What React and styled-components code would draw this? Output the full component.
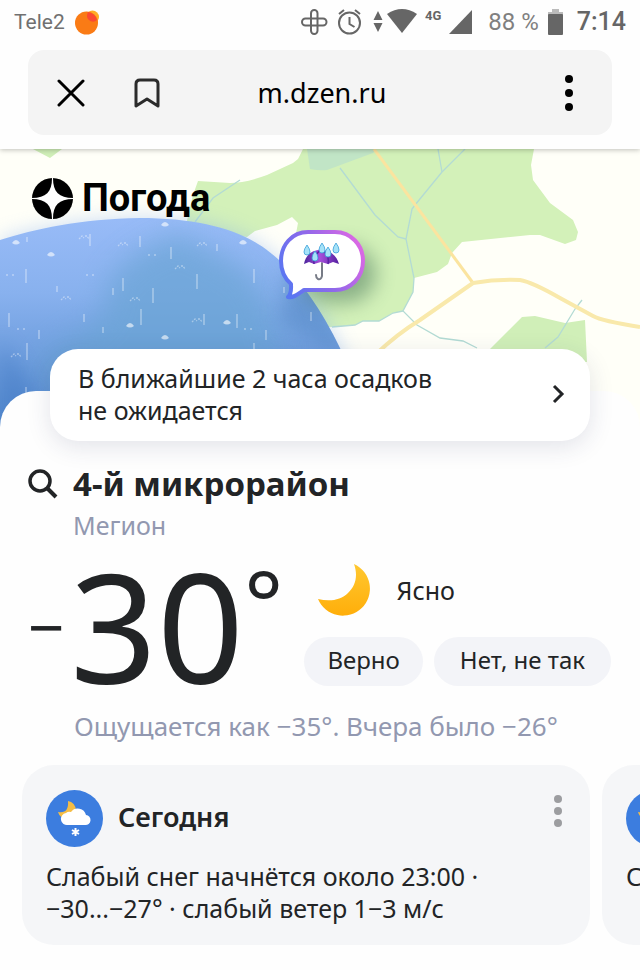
import React from "react";
import styled, { createGlobalStyle } from "styled-components";

const GlobalStyle = createGlobalStyle`
  *, *::before, *::after { box-sizing: border-box; }
  body {
    margin: 0;
    background: #fefefe;
    color: #222426;
    font-family: "Noto Sans", "Open Sans", sans-serif;
    font-size: 25px;
    line-height: 32px;
    overflow-x: hidden;
  }
  button { font: inherit; color: inherit; border: 0; background: none; padding: 0; cursor: pointer; }
  a { color: inherit; text-decoration: none; }
  h1, h2, p { margin: 0; font-weight: 400; }
  svg { display: block; flex: none; }
`;

const Header = styled.header`
  position: relative;
  z-index: 2;
  padding-bottom: 14px;
  background: #fefefe;
  box-shadow: 0 1px 5px rgba(0, 0, 0, 0.25);
`;

const StatusBar = styled.div`
  display: flex;
  align-items: center;
  justify-content: space-between;
  height: 44px;
  padding: 0 14px;
  margin-bottom: 6px;
  color: #666;
  font-family: Roboto, sans-serif;
`;

const Carrier = styled.div`
  display: flex;
  align-items: center;
  gap: 10px;
  color: #707070;
  font-size: 21px;
`;

const Indicators = styled.div`
  display: flex;
  align-items: center;
`;

const Battery = styled.span`
  margin: 0 9px 0 14px;
  color: #808080;
  font-size: 24px;
`;

const Clock = styled.time`
  margin-left: 14px;
  font-size: 25px;
  font-weight: 500;
`;

const AddressBar = styled.nav`
  display: grid;
  grid-template-columns: 86px 66px 1fr 148px;
  align-items: center;
  height: 85px;
  margin: 0 28px;
  border-radius: 16px;
  background: #f4f4f4;
  color: #000;
`;

const IconButton = styled.button`
  display: grid;
  place-items: center;
  height: 48px;
`;

const Address = styled.span`
  text-align: center;
  font-size: 27px;
`;

const MoreButton = styled(IconButton)`
  justify-self: end;
  width: 86px;
`;

const Hero = styled.section`
  position: relative;
  min-height: 278px;
  padding: 28px 32px;
  overflow: hidden;
  background: #fffff8;
`;

const MapCanvas = styled.svg`
  position: absolute;
  inset: 0;
  width: 100%;
  height: 100%;
`;

const Brand = styled.a`
  position: relative;
  display: inline-flex;
  align-items: center;
  gap: 9px;
  color: #000;
  font-family: Roboto, sans-serif;
  font-size: 38px;
  font-weight: 700;
  line-height: 42px;
`;

const Sheet = styled.main`
  position: relative;
  z-index: 1;
  margin-top: -36px;
  border-radius: 36px 36px 0 0;
  background: #fefefe;
`;

const Nowcast = styled.a`
  display: flex;
  align-items: center;
  justify-content: space-between;
  gap: 24px;
  position: relative;
  top: -42px;
  margin: 0 50px -42px;
  padding: 13px 24px 15px 28px;
  border-radius: 28px;
  background: #fff;
  box-shadow: 0 6px 24px rgba(40, 50, 90, 0.13);
`;

const Place = styled.section`
  display: grid;
  grid-template-columns: 45px 1fr;
  align-items: center;
  padding: 22px 28px 0;
`;

const PlaceName = styled.h1`
  font-size: 33px;
  font-weight: 700;
  line-height: 42px;
`;

const Region = styled.p`
  grid-column: 2;
  margin-top: 4px;
  color: #9298b0;
`;

const Current = styled.section`
  display: flex;
  justify-content: space-between;
  height: 158px;
  padding: 0 28px;
`;

const Temperature = styled.div`
  display: flex;
  align-items: flex-start;
  font-size: 152px;
  line-height: 168px;
`;

const Sign = styled.span`
  width: 42px;
  font-size: 64px;
  line-height: 172px;
`;

const Degree = styled.span`
  font-size: 92px;
  line-height: 122px;
`;

const Conditions = styled.div`
  display: flex;
  flex-direction: column;
  gap: 20px;
  padding-top: 22px;
`;

const Sky = styled.div`
  display: flex;
  align-items: center;
  gap: 26px;
  height: 54px;
  padding-left: 14px;
`;

const Votes = styled.div`
  display: flex;
  gap: 11px;
  margin-right: 1px;
`;

const Vote = styled.button`
  height: 49px;
  padding: 0 ${({ $wide }) => ($wide ? 26 : 23)}px 4px;
  border-radius: 25px;
  background: #f3f4f8;
  font-size: 24px;
  white-space: nowrap;
`;

const FeelsLike = styled.p`
  padding: 11px 28px 0 74px;
  color: #9298b0;
  font-size: 26px;
`;

const Days = styled.section`
  display: flex;
  gap: 12px;
  margin-top: 23px;
  padding: 0 22px 24px;
  overflow-x: auto;
  scrollbar-width: none;
`;

const DayCard = styled.article`
  flex: 0 0 calc(100% - 28px);
  padding: 25px 24px 21px;
  border-radius: 32px;
  background: #f5f6f8;
`;

const DayHeader = styled.header`
  display: grid;
  grid-template-columns: 57px 1fr auto;
  gap: 15px;
  margin-bottom: 13px;
  align-items: center;
`;

const DayTitle = styled.h2`
  padding-bottom: 3px;
  font-size: 27px;
  font-weight: 600;
`;

const DayMenu = styled.button`
  width: 12px;
  height: 42px;
  align-self: start;
`;

const DayText = styled.p`
  white-space: nowrap;
`;

const rain = [
  [90, 85, 12], [140, 87, 11], [171, 98, 12], [217, 95, 7], [26, 120, 14], [123, 129, 13],
  [197, 125, 15], [153, 139, 15], [254, 120, 14], [57, 137, 6], [113, 139, 7], [9, 164, 14],
  [84, 165, 8], [141, 160, 16], [204, 165, 11], [237, 165, 14], [39, 181, 9], [103, 178, 6],
  [266, 181, 10], [27, 194, 17], [254, 194, 10], [311, 163, 9], [26, 238, 12],
  [284, 138, 6], [27, 88, 5],
];
const splashes = [
  [16, 94], [51, 106], [165, 76], [243, 94], [130, 177], [165, 189], [227, 174],
];
const ripples = [
  [84, 89], [123, 96], [202, 96], [180, 119], [66, 150], [135, 151], [197, 172], [16, 207],
];
const traces = [[90, 126], [152, 106], [21, 180], [248, 180], [10, 126]];

function RegionMap() {
  return (
    <MapCanvas viewBox="0 0 640 278" preserveAspectRatio="xMidYMin slice" aria-hidden="true">
      <defs>
        <linearGradient id="rainFill" x1="0.35" y1="0.2" x2="0.35" y2="1">
          <stop offset="0" stopColor="#9bbdf9" />
          <stop offset="0.4" stopColor="#88b1ee" />
          <stop offset="1" stopColor="#5288cc" />
        </linearGradient>
        <linearGradient id="bubbleEdge" x1="0" y1="0.7" x2="1" y2="0.3">
          <stop offset="0" stopColor="#5877f2" />
          <stop offset="0.5" stopColor="#9068ea" />
          <stop offset="1" stopColor="#da68e4" />
        </linearGradient>
        <linearGradient id="canopy" x1="0" y1="0" x2="1" y2="0">
          <stop offset="0" stopColor="#4b249b" />
          <stop offset="0.45" stopColor="#a84fdc" />
          <stop offset="1" stopColor="#54209f" />
        </linearGradient>
        <filter id="soft" x="-30%" y="-30%" width="160%" height="160%" colorInterpolationFilters="sRGB">
          <feGaussianBlur stdDeviation="14" />
        </filter>
        <filter id="halo" x="-50%" y="-50%" width="200%" height="200%" colorInterpolationFilters="sRGB">
          <feGaussianBlur stdDeviation="10" />
        </filter>
        <clipPath id="rainArea">
          <path d="M0 91C35 80 80 70 140 69C190 69 232 78 258 95C290 114 320 157 340 199L370 278H0Z" />
        </clipPath>
      </defs>
      <path d="M33 0L50 9L62 0Z" fill="#d0efb8" />
      <path
        d="M303 0L298 10L293 14L267 26Q245 34 230 34L198 32L193 46L185 80L247 88L255 82L277 76L292 68L298 74L295 90L300 178L332 178L355 176L363 172L379 172L393 164L403 162L413 143L414 129L437 123L448 115L452 104L462 93L530 86L540 86L565 95L576 91L578 83L573 71L550 54L533 31L531 16L534 0Z"
        fill="#d3f1b9"
      />
      <path d="M307 0L310 20Q320 22 327 21L373 4L376 0Z" fill="#c1e5c6" />
      <path d="M490 200L522 168L535 167L565 174L585 171L587 213H480Z" fill="#d0efb8" />
      <g fill="none" stroke="#b3dbd4" strokeWidth="1.3">
        <path d="M340 19L375 66L398 88L406 90" />
        <path d="M465 0L442 23L415 56L412 60L406 90L414 129L413 143L403 162L417 176L440 189L463 192L477 199" />
        <path d="M438 0L442 23" />
        <path d="M582 151L575 160L558 188L545 199" />
        <path d="M332 178L355 176L363 172L379 172L393 164L403 162" />
        <path d="M240 31L213 49L195 73" />
      </g>
      <path d="M374 0L473 134" fill="none" stroke="#fbe49f" strokeWidth="3" />
      <path
        d="M375 206Q397 185 420 171Q450 150 473 134Q496 130 520 131Q532 133 560 149L593 167Q602 172 640 178"
        fill="none"
        stroke="#f9e9ab"
        strokeWidth="4"
      />
      <path
        d="M0 91C35 80 80 70 140 69C190 69 232 78 258 95C290 114 320 157 340 199L370 278H0Z"
        fill="#7ca8ef"
        opacity="0.4"
        filter="url(#halo)"
      />
      <g clipPath="url(#rainArea)">
        <rect width="400" height="278" fill="url(#rainFill)" />
        <path d="M180 84C150 94 100 120 106 155C100 185 45 190 42 220L80 278H260C300 210 270 150 245 120Z" fill="#6aa4d4" opacity="0.7" filter="url(#soft)" />
        <path d="M0 190L32 240V278H0Z" fill="#4279c4" opacity="0.5" filter="url(#halo)" />
        <path d="M285 120L325 150L345 205L280 175Z" fill="#4c83bd" opacity="0.5" filter="url(#halo)" />
        <g stroke="#fff" strokeOpacity="0.45" strokeWidth="1.3">
          {rain.map(([x, y, length]) => (
            <path key={`${x}-${y}`} d={`M${x} ${y}v${length}`} />
          ))}
        </g>
        <g fill="#fff" fillOpacity="0.6">
          {splashes.map(([x, y]) => (
            <path key={`${x}-${y}`} d={`M${x - 4} ${y}q4 -6 8 0q-4 3 -8 0Z`} />
          ))}
        </g>
        <g fill="none" stroke="#fff" strokeOpacity="0.4" strokeWidth="1.3" strokeDasharray="2 1">
          {ripples.map(([x, y]) => (
            <path key={`${x}-${y}`} d={`M${x - 5} ${y + 1}l3 -3l2 2M${x + 1} ${y - 2}l2 0l2 3`} />
          ))}
          {traces.map(([x, y]) => (
            <path key={`${x}-${y}`} d={`M${x - 4} ${y}h3M${x + 2} ${y}h3`} />
          ))}
        </g>
      </g>
      <rect x="300" y="96" width="76" height="58" rx="29" fill="#31624a" opacity="0.45" filter="url(#halo)" />
      <path
        d="M308 83H335C351 83 363 96 363 112C363 128 351 141 335 141H304C298 145 294 149 288 148C292 144 291 139 291 135C284 129 281 121 281 112C281 96 292 83 308 83Z"
        fill="#fff"
        stroke="url(#bubbleEdge)"
        strokeWidth="4"
        strokeLinejoin="round"
      />
      <path d="M322 114V127Q321 131 318 130Q316 129 316 126" fill="none" stroke="#777b86" strokeWidth="2" strokeLinecap="round" />
      <path d="M304 115C307 96 334 96 339 115L333 113L328 115L321 113L314 115L309 113Z" fill="url(#canopy)" />
      <path d="M321 101Q313 106 314 115M322 101Q330 106 328 115" fill="none" stroke="#5b24a7" strokeWidth="1.5" />
      <g fill="#a5e2f8" stroke="#3a9ed8" strokeWidth="0.8">
        {[[307, 96], [322, 94], [336, 94], [315, 102], [328, 98]].map(([x, y]) => (
          <path key={x} d={`M${x} ${y}q-3 4 -3 7a3 3 0 0 0 6 0q0 -3 -3 -7Z`} />
        ))}
      </g>
    </MapCanvas>
  );
}

function Dots({ color, gap, radius }) {
  const size = radius * 2;
  return (
    <svg width={size} height={gap * 2 + size} fill={color} aria-hidden="true">
      {[0, 1, 2].map((i) => (
        <circle key={i} cx={radius} cy={radius + gap * i} r={radius} />
      ))}
    </svg>
  );
}

function Moon() {
  return (
    <svg width="52" height="52" viewBox="0 0 52 52" aria-hidden="true">
      <defs>
        <linearGradient id="moon" x1="0" y1="0" x2="0" y2="1">
          <stop offset="0" stopColor="#ffc830" />
          <stop offset="1" stopColor="#ffae0a" />
        </linearGradient>
      </defs>
      <path d="M36 0A27 27 0 1 1 0 35C12 38 23 36 30 29C38 22 40 11 36 0Z" fill="url(#moon)" />
    </svg>
  );
}

function SnowBadge() {
  return (
    <svg width="57" height="57" viewBox="0 0 57 57" aria-hidden="true">
      <circle cx="28.5" cy="28.5" r="28.5" fill="#3c7ddf" />
      <path d="M22 11A9 9 0 1 1 12 22Q23 24 22 11Z" fill="#f5bd45" />
      <path d="M22 35A6 6 0 0 1 20 23A5 5 0 0 1 25 22A8.5 8.5 0 0 1 40 25A5 5 0 1 1 39 35Z" fill="#fff" />
      <path d="M29.5 38v8M26 40l7 4M33 40l-7 4" stroke="#fff" strokeWidth="2" />
    </svg>
  );
}

function StatusIcons() {
  return (
    <svg width="173" height="30" viewBox="301 7 173 30" fill="none" stroke="#666" strokeWidth="2" aria-label="Будильник, Wi-Fi, 4G" role="img">
      <rect x="311" y="10" width="6.5" height="24" rx="3.2" />
      <rect x="302" y="18.5" width="24.5" height="7" rx="3.5" />
      <circle cx="349.5" cy="23" r="10.5" />
      <path d="M349.5 17v7l5 3M339 14l5-4M355 10l5 4" />
      <g fill="#666" stroke="none">
        <path d="M373.5 20l4.5-9 4.5 9zM373.5 23h9l-4.5 9z" />
        <path d="M387 14Q402 4 417 14L402 33Z" />
        <path d="M449 34L472 10V34Z" />
        <text x="425" y="20" fontFamily="Roboto, sans-serif" fontSize="13" fontWeight="700">4G</text>
      </g>
    </svg>
  );
}

export default function App() {
  return (
    <>
      <GlobalStyle />
      <Header>
        <StatusBar>
          <Carrier>
            Tele2
            <svg width="25" height="25" viewBox="0 0 25 25" aria-hidden="true">
              <circle cx="17.5" cy="7" r="6.5" fill="#ffad27" />
              <circle cx="11.5" cy="13" r="11.5" fill="#fa7b15" />
              <path d="M12 5A6 6 0 0 0 22 10A11 11 0 0 0 13 2Z" fill="#fb4932" />
            </svg>
          </Carrier>
          <Indicators>
            <StatusIcons />
            <Battery>88 %</Battery>
            <svg width="15" height="26" viewBox="0 0 15 26" aria-hidden="true">
              <path d="M4 0H11V3H15V7H0V3H4Z" fill="#bbb" />
              <rect y="5" width="15" height="21" rx="1" fill="#666" />
            </svg>
            <Clock>7:14</Clock>
          </Indicators>
        </StatusBar>
        <AddressBar aria-label="Браузер">
          <IconButton aria-label="Закрыть">
            <svg width="28" height="28" viewBox="0 0 28 28" stroke="#000" strokeWidth="3" strokeLinecap="round">
              <path d="M2 2L26 26M26 2L2 26" />
            </svg>
          </IconButton>
          <IconButton aria-label="Добавить в закладки">
            <svg width="26" height="30" viewBox="0 0 26 30" fill="none" stroke="#2b2b2b" strokeWidth="3" strokeLinejoin="round">
              <path d="M2 28V6Q2 2 6 2H20Q24 2 24 6V28L13 21Z" />
            </svg>
          </IconButton>
          <Address>m.dzen.ru</Address>
          <MoreButton aria-label="Меню">
            <Dots color="#000" gap={14} radius={4} />
          </MoreButton>
        </AddressBar>
      </Header>
      <Hero>
        <RegionMap />
        <Brand href="#weather">
          <svg width="41" height="41" viewBox="0 0 41 41" aria-hidden="true">
            <circle cx="20.5" cy="20.5" r="20.5" fill="#000" />
            <path d="M20 0H21C21 14 27 20 41 20V21C27 21 21 27 21 41H20C20 27 14 21 0 21V20C14 20 20 14 20 0Z" fill="#fff" />
          </svg>
          Погода
        </Brand>
      </Hero>
      <Sheet id="weather">
        <Nowcast href="#nowcast">
          <span>
            В ближайшие 2 часа осадков
            <br />
            не ожидается
          </span>
          <svg width="16" height="20" viewBox="0 0 16 20" fill="none" stroke="#222426" strokeWidth="3" aria-hidden="true">
            <path d="M4 2L12 10L4 18" />
          </svg>
        </Nowcast>
        <Place>
          <svg width="30" height="30" viewBox="0 0 30 30" fill="none" stroke="#222426" strokeWidth="3.5" aria-hidden="true">
            <circle cx="12" cy="12" r="10" />
            <path d="M19 19L28 28" strokeWidth="4" />
          </svg>
          <PlaceName>4-й микрорайон</PlaceName>
          <Region>Мегион</Region>
        </Place>
        <Current>
          <Temperature>
            <Sign>−</Sign>
            <span>30</span>
            <Degree>°</Degree>
          </Temperature>
          <Conditions>
            <Sky>
              <Moon />
              Ясно
            </Sky>
            <Votes>
              <Vote>Верно</Vote>
              <Vote $wide>Нет, не так</Vote>
            </Votes>
          </Conditions>
        </Current>
        <FeelsLike>Ощущается как −35°. Вчера было −26°</FeelsLike>
        <Days aria-label="Прогноз">
          <DayCard>
            <DayHeader>
              <SnowBadge />
              <DayTitle>Сегодня</DayTitle>
              <DayMenu aria-label="Действия">
                <Dots color="#9c9da0" gap={12} radius={4} />
              </DayMenu>
            </DayHeader>
            <DayText>
              Слабый снег начнётся около 23:00 ·
              <br />
              −30...−27° · слабый ветер 1−3 м/с
            </DayText>
          </DayCard>
          <DayCard>
            <DayHeader>
              <SnowBadge />
            </DayHeader>
            <DayText>С</DayText>
          </DayCard>
        </Days>
      </Sheet>
    </>
  );
}
